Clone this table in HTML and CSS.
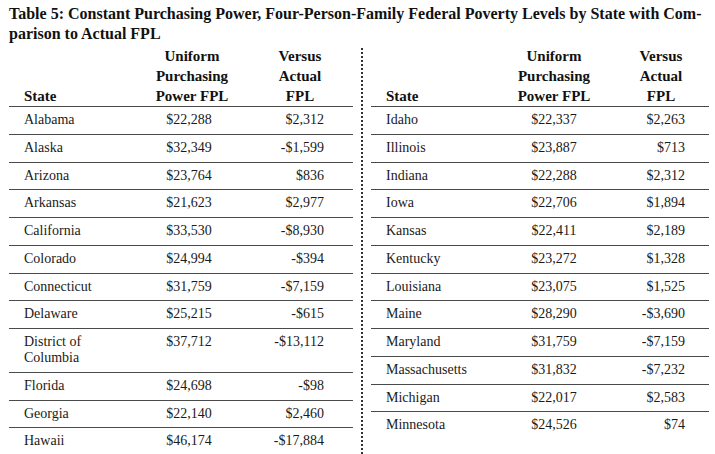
FILE: index.html
```html
<!DOCTYPE html>
<html>
<head>
<meta charset="utf-8">
<link rel="stylesheet" href="styles.css">
</head>
<body>
<div class="page">
  <h1 class="title">Table 5: Constant Purchasing Power, Four-Person-Family Federal Poverty Levels by State with Com-<br>parison to Actual FPL</h1>
  <div class="tables">
    <table class="fpl left">
      <colgroup><col class="c-state"><col class="c-uni"><col class="c-vs"></colgroup>
      <thead>
        <tr><th class="h-state">State</th><th class="h-uni">Uniform<br>Purchasing<br>Power FPL</th><th class="h-vs"><span>Versus<br>Actual<br>FPL</span></th></tr>
      </thead>
      <tbody>
        <tr><td>Alabama</td><td>$22,288</td><td>$2,312</td></tr>
        <tr><td>Alaska</td><td>$32,349</td><td>-$1,599</td></tr>
        <tr><td>Arizona</td><td>$23,764</td><td>$836</td></tr>
        <tr><td>Arkansas</td><td>$21,623</td><td>$2,977</td></tr>
        <tr><td>California</td><td>$33,530</td><td>-$8,930</td></tr>
        <tr><td>Colorado</td><td>$24,994</td><td>-$394</td></tr>
        <tr><td>Connecticut</td><td>$31,759</td><td>-$7,159</td></tr>
        <tr><td>Delaware</td><td>$25,215</td><td>-$615</td></tr>
        <tr><td>District of<br>Columbia</td><td>$37,712</td><td>-$13,112</td></tr>
        <tr><td>Florida</td><td>$24,698</td><td>-$98</td></tr>
        <tr><td>Georgia</td><td>$22,140</td><td>$2,460</td></tr>
        <tr><td>Hawaii</td><td>$46,174</td><td>-$17,884</td></tr>
      </tbody>
    </table>
    <div class="divider"></div>
    <table class="fpl right">
      <colgroup><col class="c-state"><col class="c-uni"><col class="c-vs"></colgroup>
      <thead>
        <tr><th class="h-state">State</th><th class="h-uni">Uniform<br>Purchasing<br>Power FPL</th><th class="h-vs"><span>Versus<br>Actual<br>FPL</span></th></tr>
      </thead>
      <tbody>
        <tr><td>Idaho</td><td>$22,337</td><td>$2,263</td></tr>
        <tr><td>Illinois</td><td>$23,887</td><td>$713</td></tr>
        <tr><td>Indiana</td><td>$22,288</td><td>$2,312</td></tr>
        <tr><td>Iowa</td><td>$22,706</td><td>$1,894</td></tr>
        <tr><td>Kansas</td><td>$22,411</td><td>$2,189</td></tr>
        <tr><td>Kentucky</td><td>$23,272</td><td>$1,328</td></tr>
        <tr><td>Louisiana</td><td>$23,075</td><td>$1,525</td></tr>
        <tr><td>Maine</td><td>$28,290</td><td>-$3,690</td></tr>
        <tr><td>Maryland</td><td>$31,759</td><td>-$7,159</td></tr>
        <tr><td>Massachusetts</td><td>$31,832</td><td>-$7,232</td></tr>
        <tr><td>Michigan</td><td>$22,017</td><td>$2,583</td></tr>
        <tr><td>Minnesota</td><td>$24,526</td><td>$74</td></tr>
      </tbody>
    </table>
  </div>
</div>
</body>
</html>
```

FILE: styles.css
```css
html, body {
  margin: 0;
  padding: 0;
  background: #ffffff;
}
body {
  width: 715px;
  height: 454px;
  overflow: hidden;
  font-family: "Liberation Serif", "Times New Roman", serif;
  color: #1a1a1a;
}
.page {
  padding: 4px 0 0 9px;
}
.title {
  margin: 0 0 2px 0;
  font-size: 16px;
  line-height: 20px;
  font-weight: bold;
  white-space: nowrap;
  color: #111;
}
.tables {
  display: flex;
  align-items: flex-start;
  height: 408px;
}
.divider {
  flex: none;
  align-self: stretch;
  margin: 2px 8px 0 8px;
  border-left: 2px dotted #333;
}
.fpl {
  flex: none;
  border-collapse: collapse;
  table-layout: fixed;
  font-size: 14px;
}
.fpl.left { width: 344px; }
.fpl.right { width: 338px; }
.left .c-state { width: 131px; }
.left .c-uni { width: 110px; }
.left .c-vs { width: 103px; }
.right .c-state { width: 133px; }
.right .c-uni { width: 100px; }
.right .c-vs { width: 105px; }

.fpl th {
  font-size: 15px;
  line-height: 20px;
  font-weight: bold;
  vertical-align: bottom;
  padding: 0;
  border-bottom: 1px solid #4a4a4a;
  color: #111;
}
.fpl .h-state {
  text-align: left;
  padding-left: 15px;
}
.fpl .h-uni { text-align: center; }
.left .h-uni { padding-right: 6px; }
.fpl .h-vs { text-align: right; }
.fpl .h-vs span {
  display: inline-block;
  width: 64px;
  text-align: center;
}
.left .h-vs { padding-right: 21px; }
.right .h-vs { padding-right: 16px; }

.fpl td {
  line-height: 16px;
  padding: 5px 0 5.75px 0;
  vertical-align: top;
  border-bottom: 1px solid #4a4a4a;
}
.fpl tr:last-child td { border-bottom: none; }
.fpl td:nth-child(1) {
  text-align: left;
  padding-left: 15px;
}
.fpl td:nth-child(2) { text-align: center; }
.left td:nth-child(2) { padding-right: 12px; }
.fpl td:nth-child(3) { text-align: right; }
.left td:nth-child(3) { padding-right: 29px; }
.right td:nth-child(3) { padding-right: 24px; }
```
